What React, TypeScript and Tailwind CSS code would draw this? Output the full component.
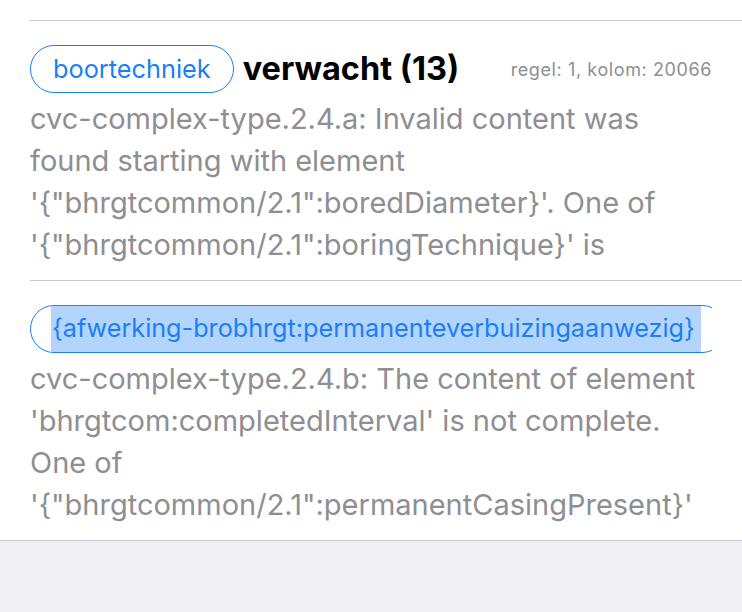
export default function App() {
  const font = { fontFamily: 'Inter, "Liberation Sans", sans-serif' }
  return (
    <div className="w-[742px] h-[612px] bg-[#efeff4] flex flex-col overflow-hidden" style={font}>
      <div className="bg-white">
        <div className="ml-[30px] h-[21px] border-b border-[#c8c7cc]" />
        <div className="ml-[30px] pr-[30px] pt-[24px] pb-[14px] border-b border-[#c8c7cc]">
          <div className="flex items-center h-[48px]">
            <span className="h-[48px] flex items-center px-[22px] rounded-full border-[1.5px] border-[#1a7ff5] text-[#1a7ff5] text-[25.3px]">
              boortechniek
            </span>
            <span className="ml-[9px] text-[32.5px] font-bold text-black">verwacht (13)</span>
            <span className="ml-auto text-[18px] tracking-[0.6px] text-[#8e8e93]">regel: 1, kolom: 20066</span>
          </div>
          <p className="mt-[5px] text-[29px] leading-[42px] text-[#8e8e93]">
            cvc-complex-type.2.4.a: Invalid content was
            <br />
            found starting with element
            <br />
            '{'{'}"bhrgtcommon/2.1":boredDiameter{'}'}'. One of
            <br />
            '{'{'}"bhrgtcommon/2.1":boringTechnique{'}'}' is
          </p>
        </div>
        <div className="ml-[30px] pr-[30px] pt-[24px] pb-[14px]">
          <div className="h-[48px] overflow-hidden">
            <span className="inline-flex h-[48px] items-stretch pl-[20px] pr-[24px] rounded-full border-[1.5px] border-[#1a7ff5] text-[#1a7ff5] text-[25.2px] whitespace-nowrap">
              <span className="bg-[#b3d5fd] flex items-center pl-[1px] pr-[6px]">
                {'{'}afwerking-brobhrgt:permanenteverbuizingaanwezig{'}'}
              </span>
            </span>
          </div>
          <p className="mt-[5px] text-[29px] leading-[42px] text-[#8e8e93]">
            cvc-complex-type.2.4.b: The content of element
            <br />
            'bhrgtcom:completedInterval' is not complete.
            <br />
            One of
            <br />
            '{'{'}"bhrgtcommon/2.1":permanentCasingPresent{'}'}'
          </p>
        </div>
      </div>
      <div className="border-t border-[#c8c7cc] flex-1" />
    </div>
  )
}
